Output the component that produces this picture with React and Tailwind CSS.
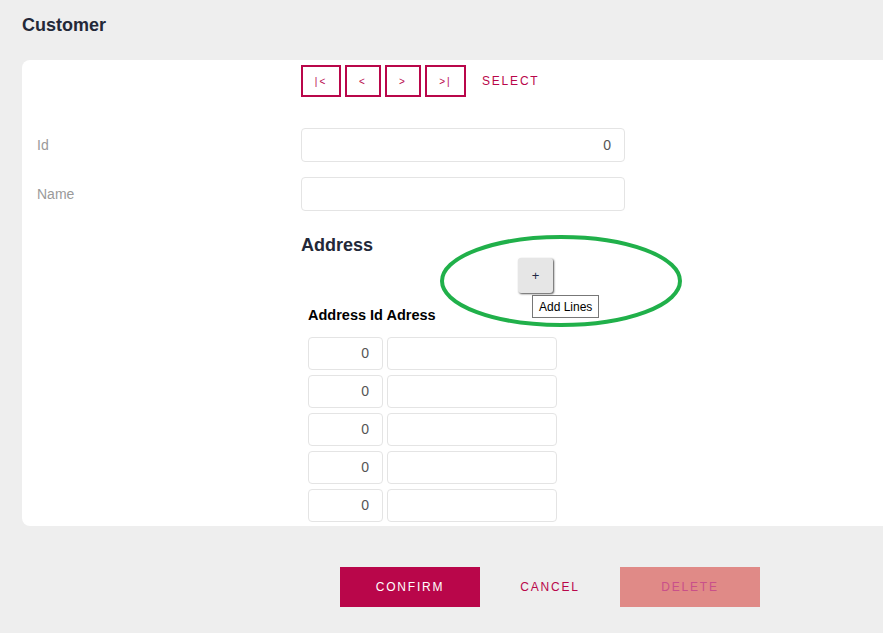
import React from "react";

const crimson = "text-[#b9064a]";

function NavBtn({ w, children }) {
  return (
    <button
      className={`h-[32px] ${w} border-2 border-[#b9064a] bg-white text-[10px] text-[#b9064a] flex items-center justify-center tracking-[2px]`}
    >
      {children}
    </button>
  );
}

function Field({ value, className = "" }) {
  return (
    <div
      className={`border border-[#e4e4e4] rounded-[4px] bg-white flex items-center justify-end pr-[12px] text-[14px] text-[#555] ${className}`}
    >
      {value}
    </div>
  );
}

export default function App() {
  const rows = [0, 1, 2, 3, 4];
  return (
    <div
      className="min-h-[633px] w-[883px] overflow-hidden bg-[#eeeeee] pl-[22px] pt-[14px]"
      style={{ fontFamily: '"Liberation Sans", Arial, sans-serif' }}
    >
      <h1 className="text-[18px] font-bold leading-[22px] text-[#232838]">Customer</h1>

      <div className="mt-[24px] bg-white rounded-l-[8px] pt-[5px] pb-[4px] pl-[15px]">
        <div className="grid grid-cols-[264px_1fr]">
          <div />
          <div className="flex items-center gap-[4px]">
            <NavBtn w="w-[40px]">|&lt;</NavBtn>
            <NavBtn w="w-[36px]">&lt;</NavBtn>
            <NavBtn w="w-[36px]">&gt;</NavBtn>
            <NavBtn w="w-[41px]">&gt;|</NavBtn>
            <span className={`ml-[12px] text-[12px] tracking-[1.8px] ${crimson}`}>SELECT</span>
          </div>

          <div className="mt-[31px] flex items-center text-[14px] text-[#9a9a9a]">Id</div>
          <Field value="0" className="mt-[31px] w-[324px] h-[34px] pr-[13px]" />

          <div className="mt-[15px] flex items-center text-[14px] text-[#9a9a9a]">Name</div>
          <Field value="" className="mt-[15px] w-[324px] h-[34px]" />

          <div />
          <div className="relative">
            <h2 className="mt-[24px] text-[18px] font-bold leading-[20px] text-[#232838]">Address</h2>

            <svg
              className="absolute left-[138px] top-[23px] pointer-events-none"
              width="244"
              height="94"
              viewBox="0 0 244 94"
            >
              <ellipse cx="122" cy="47" rx="119" ry="44" fill="none" stroke="#20b04a" strokeWidth="4" />
            </svg>

            <div className="ml-[217px] mt-[3px] w-[35px] h-[35px] rounded-[3px] bg-[#e6e6e6] shadow-[1px_1px_2px_#555] flex items-center justify-center text-[13px] text-[#1f2a44]">
              +
            </div>
            <div className="absolute left-[231px] top-[84px] border border-[#777] bg-white px-[6px] h-[23px] flex items-center text-[12px] text-black">
              Add Lines
            </div>

            <div className="ml-[7px] mt-[14px] text-[14.5px] font-bold leading-[17px] text-black">
              Address Id Adress
            </div>

            <div className="ml-[7px] mt-[13px] flex flex-col gap-[5px]">
              {rows.map((r) => (
                <div key={r} className="flex gap-[4px]">
                  <Field value="0" className="w-[75px] h-[33px] pr-[13px]" />
                  <Field value="" className="w-[170px] h-[33px]" />
                </div>
              ))}
            </div>
          </div>
        </div>
      </div>

      <div className="mt-[41px] ml-[318px] flex text-[12px] tracking-[1.8px]">
        <button className="w-[140px] h-[40px] bg-[#b9064a] text-white">CONFIRM</button>
        <button className={`w-[140px] h-[40px] ${crimson}`}>CANCEL</button>
        <button className="w-[140px] h-[40px] bg-[#e08a87] text-[#c9508a]">DELETE</button>
      </div>
    </div>
  );
}
